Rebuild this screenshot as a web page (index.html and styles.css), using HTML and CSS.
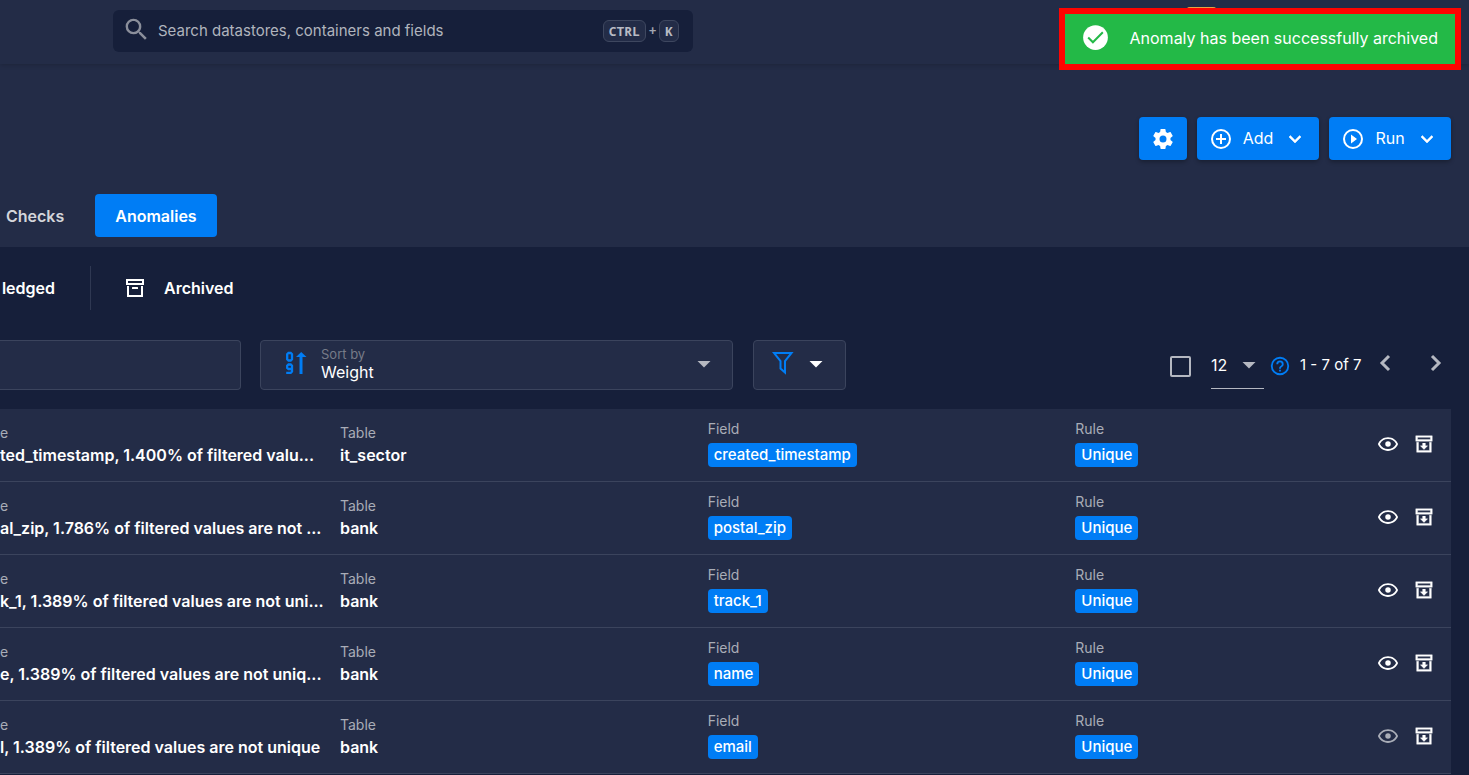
FILE: index.html
```html
<!DOCTYPE html>
<html lang="en">
<head>
<meta charset="utf-8">
<title>Anomalies</title>
<link rel="stylesheet" href="styles.css">
</head>
<body>
<svg class="sprite" aria-hidden="true">
  <symbol id="eye" viewBox="0 0 24 24"><path d="M12 9a3 3 0 0 1 3 3 3 3 0 0 1-3 3 3 3 0 0 1-3-3 3 3 0 0 1 3-3m0-4.500c5 0 9.270 3.110 11 7.500-1.730 4.390-6 7.500-11 7.500S2.730 16.390 1 12c1.730-4.390 6-7.500 11-7.500M3.180 12a9.821 9.821 0 0 0 17.640 0 9.821 9.821 0 0 0-17.640 0z"/></symbol>
  <symbol id="archive" viewBox="0 0 24 24"><path d="M20 21H4V10h2v9h12v-9h2v11M3 3h18v6H3V3m2 2v2h14V5M10.500 11v3H8l4 4 4-4h-2.500v-3" stroke="currentColor" stroke-width=".4"/></symbol>
  <symbol id="down" viewBox="0 0 24 24"><path d="M7.410 8.580 12 13.170l4.590-4.590L18 10l-6 6-6-6z" stroke="currentColor" stroke-width=".5"/></symbol>
  <symbol id="caret" viewBox="0 0 24 24"><path d="m5.500 9 6.500 6.500L18.500 9z"/></symbol>
</svg>

<header class="topbar">
  <label class="search">
    <svg class="icon-lg" viewBox="0 0 24 24" aria-hidden="true"><path d="M9.500 3A6.500 6.500 0 0 1 16 9.500c0 1.610-.59 3.090-1.560 4.230l.27.270h.79l5 5-1.500 1.500-5-5v-.79l-.27-.27A6.516 6.516 0 0 1 9.500 16 6.500 6.500 0 0 1 3 9.500 6.500 6.500 0 0 1 9.500 3m0 2C7 5 5 7 5 9.500S7 14 9.500 14 14 12 14 9.500 12 5 9.500 5z"/></svg>
    <input type="search" placeholder="Search datastores, containers and fields" aria-label="Search">
    <span class="keys"><kbd>CTRL</kbd><span>+</span><kbd>K</kbd></span>
  </label>
  <span class="badge"></span>
</header>

<div class="toast" role="status">
  <svg viewBox="0 0 24 24" aria-hidden="true"><circle cx="12" cy="12" r="11" fill="#fff"/><path d="m5.500 12 4.200 4.200 8.800-8.800" fill="none" stroke="#23b947" stroke-width="1.800"/></svg>
  <span>Anomaly has been successfully archived</span>
</div>

<section class="page-head">
  <div class="actions">
    <button class="btn btn-icon" aria-label="Settings"><svg viewBox="0 0 24 24"><path d="M12 15.500A3.500 3.500 0 0 1 8.500 12 3.500 3.500 0 0 1 12 8.500a3.500 3.500 0 0 1 3.500 3.500 3.500 3.500 0 0 1-3.500 3.500m7.430-2.530c.04-.32.070-.64.070-.97s-.03-.66-.07-1l2.110-1.630c.19-.15.240-.42.120-.64l-2-3.460c-.12-.22-.39-.31-.61-.22l-2.490 1c-.52-.39-1.060-.73-1.690-.98l-.37-2.650A.506.506 0 0 0 14 2h-4c-.25 0-.46.180-.5.420l-.37 2.650c-.63.250-1.170.590-1.690.98l-2.490-1c-.22-.09-.49 0-.61.220l-2 3.460c-.13.220-.07.490.120.640L4.570 11c-.04.340-.07.670-.07 1s.03.650.070.970l-2.110 1.660c-.19.150-.25.420-.12.640l2 3.460c.12.220.390.300.610.220l2.490-1.010c.52.400 1.060.740 1.690.990l.37 2.650c.04.240.250.420.500.420h4c.25 0 .46-.18.500-.42l.37-2.650c.63-.26 1.170-.59 1.690-.99l2.490 1.010c.22.080.490 0 .61-.22l2-3.460c.12-.22.070-.49-.12-.64z"/></svg></button>
    <button class="btn"><svg viewBox="0 0 24 24"><path d="M12 20a8 8 0 1 1 0-16 8 8 0 0 1 0 16m0-18a10 10 0 1 0 0 20 10 10 0 0 0 0-20m1 5h-2v4H7v2h4v4h2v-4h4v-2h-4z"/></svg><span>Add</span><svg class="chev"><use href="#down"/></svg></button>
    <button class="btn"><svg viewBox="0 0 24 24"><path d="M12 20a8 8 0 1 1 0-16 8 8 0 0 1 0 16m0-18a10 10 0 1 0 0 20 10 10 0 0 0 0-20m-2 14.500 6-4.500-6-4.500z"/></svg><span>Run</span><svg class="chev"><use href="#down"/></svg></button>
  </div>
  <nav class="tabs">
    <a href="#checks">Checks</a>
    <a href="#anomalies" class="active">Anomalies</a>
  </nav>
</section>

<main>
  <nav class="states">
    <a href="#acknowledged" class="state-cut">ledged</a>
    <a href="#archived" class="state"><svg viewBox="0 0 24 24" aria-hidden="true"><path d="M20 21H4V10h2v9h12v-9h2v11M3 3h18v6H3V3m2 2v2h14V5M9.500 11h5c.3 0 .5.200.5.500V13H9v-1.500c0-.3.200-.5.500-.5"/></svg>Archived</a>
  </nav>

  <div class="filters">
    <input class="box box-cut" type="text" aria-label="Filter anomalies">
    <div class="box sort">
      <svg class="sort-icon" viewBox="0 0 22 24" aria-hidden="true"><path d="M16 23V5" stroke-width="3"/><path d="m11 6 5.200-5L21.500 6z" class="solid"/><path d="M3.500 2h2.200L7 3.300v5L5.700 9.500H3.500L2.200 8.300v-5zM7 18H3.500L2.200 17v-2.200l1.300-1.300h2.200L7 14.800v5.700l-1.300 1.300H1.200" stroke-width="2.300"/></svg>
      <div class="sort-field">
        <label for="sort">Sort by</label>
        <select id="sort"><option>Weight</option></select>
      </div>
      <svg class="caret"><use href="#caret"/></svg>
    </div>
    <button class="box filter" aria-label="Filter">
      <svg class="funnel" viewBox="0 0 22 24"><path d="M2 2h17.500L13 10v11.500l-4.500-4V10z"/></svg>
      <svg class="caret"><use href="#caret"/></svg>
    </button>
    <div class="pager">
      <input type="checkbox" aria-label="Select all">
      <label class="size"><select aria-label="Items per page"><option>12</option></select><svg class="caret"><use href="#caret"/></svg></label>
      <svg class="help" viewBox="0 0 24 24" aria-hidden="true"><path d="M11 18h2v-2h-2zM12 2a10 10 0 1 0 0 20 10 10 0 0 0 0-20m0 18a8 8 0 1 1 0-16 8 8 0 0 1 0 16m0-14a4 4 0 0 0-4 4h2a2 2 0 1 1 4 0c0 2-3 1.750-3 5h2c0-2.250 3-2.500 3-5a4 4 0 0 0-4-4"/></svg>
      <span class="range">1 - 7 of 7</span>
      <button class="page prev" aria-label="Previous page"><svg viewBox="0 0 12 18"><path d="m10 2-7 7 7 7"/></svg></button>
      <button class="page next" aria-label="Next page"><svg viewBox="0 0 12 18"><path d="m2 2 7 7-7 7"/></svg></button>
    </div>
  </div>

  <ul class="rows">
    <li class="row"><div class="cell message"><span>e</span><b>ted_timestamp, 1.400% of filtered valu...</b></div><div class="cell table"><span>Table</span><b>it_sector</b></div><div class="cell field"><span>Field</span><a href="#f" class="chip">created_timestamp</a></div><div class="cell rule"><span>Rule</span><a href="#r" class="chip">Unique</a></div><div class="tools"><button aria-label="Acknowledge"><svg><use href="#eye"/></svg></button><button aria-label="Archive"><svg><use href="#archive"/></svg></button></div></li>
    <li class="row"><div class="cell message"><span>e</span><b>al_zip, 1.786% of filtered values are not ...</b></div><div class="cell table"><span>Table</span><b>bank</b></div><div class="cell field"><span>Field</span><a href="#f" class="chip">postal_zip</a></div><div class="cell rule"><span>Rule</span><a href="#r" class="chip">Unique</a></div><div class="tools"><button aria-label="Acknowledge"><svg><use href="#eye"/></svg></button><button aria-label="Archive"><svg><use href="#archive"/></svg></button></div></li>
    <li class="row"><div class="cell message"><span>e</span><b>k_1, 1.389% of filtered values are not uni...</b></div><div class="cell table"><span>Table</span><b>bank</b></div><div class="cell field"><span>Field</span><a href="#f" class="chip">track_1</a></div><div class="cell rule"><span>Rule</span><a href="#r" class="chip">Unique</a></div><div class="tools"><button aria-label="Acknowledge"><svg><use href="#eye"/></svg></button><button aria-label="Archive"><svg><use href="#archive"/></svg></button></div></li>
    <li class="row"><div class="cell message"><span>e</span><b>e, 1.389% of filtered values are not uniq...</b></div><div class="cell table"><span>Table</span><b>bank</b></div><div class="cell field"><span>Field</span><a href="#f" class="chip">name</a></div><div class="cell rule"><span>Rule</span><a href="#r" class="chip">Unique</a></div><div class="tools"><button aria-label="Acknowledge"><svg><use href="#eye"/></svg></button><button aria-label="Archive"><svg><use href="#archive"/></svg></button></div></li>
    <li class="row"><div class="cell message"><span>e</span><b>l, 1.389% of filtered values are not unique</b></div><div class="cell table"><span>Table</span><b>bank</b></div><div class="cell field"><span>Field</span><a href="#f" class="chip">email</a></div><div class="cell rule"><span>Rule</span><a href="#r" class="chip">Unique</a></div><div class="tools"><button class="dim" aria-label="Acknowledge"><svg><use href="#eye"/></svg></button><button aria-label="Archive"><svg><use href="#archive"/></svg></button></div></li>
  </ul>
</main>
</body>
</html>
```

FILE: styles.css
```css
* { box-sizing: border-box; }
body {
  margin: 0;
  overflow: hidden;
  background: #161f3a;
  color: #fff;
  font: 16px/24px Inter, "Liberation Sans", sans-serif;
}
a { color: inherit; text-decoration: none; }
button, input, select { font: inherit; color: inherit; }
svg { display: block; flex: none; fill: currentColor; }
.sprite { position: absolute; width: 0; height: 0; }

.topbar {
  display: flex;
  height: 64px;
  padding: 10px 18px 12px 113px;
  background: #232c47;
  box-shadow: 0 1px 5px rgba(0, 0, 0, .2);
  position: relative;
}
.search {
  display: flex;
  align-items: center;
  width: 580px;
  height: 42px;
  padding: 0 14px 0 9px;
  border-radius: 6px;
  background: #161f3a;
  color: #a3a7b1;
}
.icon-lg { width: 29px; height: 29px; margin-bottom: 3px; color: #8b8f9b; }
.search input {
  flex: 1;
  min-width: 0;
  margin-left: 7px;
  padding: 0;
  border: 0;
  outline: 0;
  background: none;
  font-size: 15px;
}
.search input::placeholder { color: #b0b4bd; opacity: 1; }
.keys { display: flex; align-items: center; gap: 3px; font: 700 12px/20px "DejaVu Sans Mono", monospace; }
kbd {
  padding: 0 5px;
  border: 1px solid #3e475f;
  border-radius: 6px;
  background: #232c47;
  color: #b8bbc4;
  font: 700 13px/20px "Noto Sans Mono", "DejaVu Sans Mono", monospace;
}
.badge {
  position: absolute;
  top: 7px;
  right: 251px;
  width: 33px;
  height: 20px;
  border-radius: 5px;
  background: #e0a648;
}
.toast {
  position: absolute;
  z-index: 2;
  top: 8px;
  right: 8px;
  display: flex;
  align-items: center;
  gap: 21px;
  height: 62px;
  padding: 0 17px 3px;
  border: 6px solid #ff0400;
  background: #23b947;
}
.toast svg { width: 27px; height: 27px; }

.page-head {
  display: flex;
  flex-direction: column;
  gap: 34px;
  padding: 53px 18px 10px 6px;
  background: #232c47;
}
.actions { display: flex; justify-content: flex-end; gap: 10px; }
.btn {
  display: flex;
  align-items: center;
  height: 43px;
  padding: 0 12px;
  border: 0;
  border-radius: 4px;
  background: #007df5;
  box-shadow: 0 2px 4px rgba(0, 0, 0, .3);
}
.btn svg { width: 24px; height: 24px; }
.btn span { width: 32px; margin: 0 9px; padding-bottom: 2px; }
.tabs { display: flex; align-items: center; gap: 31px; font-weight: 600; color: #d3d5da; }
.tabs .active {
  padding: 10px 20px 9px;
  border-radius: 4px;
  background: #007df5;
  color: #fff;
}

main { padding: 19px 18px 0 0; }
.states { display: flex; height: 44px; font-weight: 600; }
.state-cut { display: flex; align-items: center; justify-content: flex-end; width: 91px; padding-right: 35px; border-right: 1px solid #2f3852; }
.state { display: flex; align-items: center; gap: 17px; padding-left: 32px; }
.state svg { width: 24px; height: 24px; }

.filters { display: flex; margin-top: 30px; height: 50px; }
.box { border: 1px solid #3b445d; border-radius: 4px; background: #232c47; }
.box-cut { width: 241px; border-left: 0; border-radius: 0 4px 4px 0; padding: 0 12px; }
.sort { display: flex; width: 473px; margin-left: 19px; padding: 0 16px 0 24px; }
.sort-icon { width: 22px; height: 24px; margin-top: 10px; fill: none; stroke: #007df5; }
.sort-icon .solid { fill: #007df5; stroke: none; }
.sort-field { flex: 1; display: flex; flex-direction: column; margin-left: 14px; padding-top: 6px; }
.sort-field label { font-size: 13px; line-height: 14px; color: #777b88; }
select { appearance: none; border: 0; outline: 0; padding: 0; background: none; }
.sort-field select { height: 22px; line-height: 22px; }
.caret { width: 24px; height: 24px; margin-top: 11px; color: #b5b8c1; }
.filter { display: flex; width: 93px; margin-left: 20px; padding: 0 18px; gap: 10px; }
.filter .caret { color: #fff; }
.funnel { width: 22px; height: 24px; margin-top: 10px; fill: none; stroke: #007df5; stroke-width: 2; }
.pager { display: flex; align-items: center; margin-left: auto; }
.pager input { appearance: none; width: 21px; height: 21px; margin: 3px 20px 0 0; border: 2px solid #b5b8c1; border-radius: 2px; }
.size { display: flex; align-items: center; width: 53px; height: 48px; border-bottom: 1px solid #b5b8c1; }
.size select { width: 26px; }
.size .caret { margin: 0; }
.help { width: 22px; height: 22px; margin: 2px 0 0 5px; color: #007df5; }
.range { margin-left: 9px; width: 72px; font-size: 15px; white-space: nowrap; }
.page { padding: 0; border: 0; background: none; }
.page svg { width: 12px; height: 18px; fill: none; stroke: #b5b8c1; stroke-width: 3; margin-bottom: 4px; }
.prev { margin-left: 7px; }
.next { margin: 0 9px 0 39px; }

.rows { list-style: none; margin: 19px 0 0; padding: 0; }
.row {
  display: grid;
  grid-template-columns: 340px 1fr 1fr 1fr;
  height: 73px;
  padding-right: 8px;
  border-bottom: 1px solid #3b445d;
  background: #232c47;
}
.cell {
  grid-row: 1;
  display: flex;
  flex-direction: column;
  align-items: flex-start;
  justify-content: center;
  white-space: nowrap;
}
.message { grid-column: 1; }
.table { grid-column: 2; }
.field { grid-column: 3; }
.rule { grid-column: 4; }
.field, .rule { padding-bottom: 4px; }
.cell span { font-size: 14px; line-height: 20px; color: #a9adb7; }
.cell b { font-weight: 600; line-height: 24px; }
.chip {
  margin-top: 4px;
  padding: 0 6px;
  border-radius: 4px;
  background: #007df5;
  font-size: 15px;
  font-weight: 500;
  line-height: 24px;
}
.tools {
  grid-row: 1;
  grid-column: 4;
  justify-self: end;
  display: flex;
  align-items: center;
  gap: 14px;
  padding: 0 8px 2px 0;
}
.tools button { padding: 0; border: 0; background: none; }
.tools svg { width: 22px; height: 22px; }
.tools .dim { color: #a9adb7; }
```
